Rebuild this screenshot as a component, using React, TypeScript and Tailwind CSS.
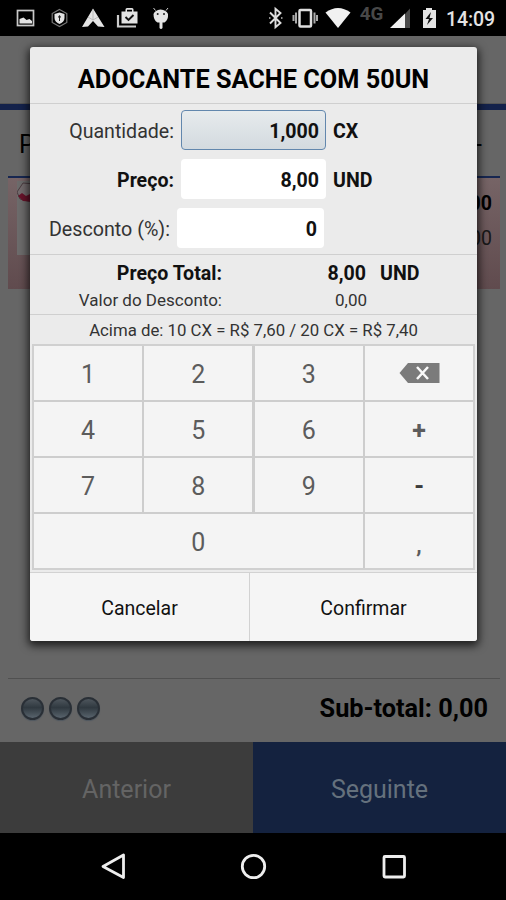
import React from "react";

function StatusBar() {
  return (
    <header className="h-9 shrink-0 bg-black">
      <svg width="506" height="36" viewBox="0 0 506 36" fill="#e4e4e4">
        <rect x="17.5" y="10.5" width="16" height="15" fill="none" stroke="#c8c8c8" strokeWidth="1.7" />
        <path d="M19.500 23.500v-4.500l4-1.500 3 2.500 3-1 2.500 2v2.500z" />
        <path d="M59.500 9.500l7.300 4v9l-7.300 4-7.300-4v-9z" fill="none" stroke="#777" strokeWidth="1.200" />
        <path d="M59.500 12.500l5 1.500v4c0 3-2.300 4.700-5 6-2.700-1.300-5-3-5-6v-4z" />
        <path d="M59.500 15l1.500 2-1 1v3h-1v-3l-1-1z" fill="#222" />
        <path d="M93 8.500L104.500 27l-6.500-.5-5-5.500-5 5.500-6 .5z" />
        <path d="M88 17l5 3 5-3M93 9v11" stroke="#aaa" strokeWidth=".7" fill="none" />
        <path d="M118 15v11.500h18" fill="none" stroke="#ccc" strokeWidth="2.200" />
        <path d="M121.500 11.500h4V9.500q0-1.500 1.500-1.500h5q1.500 0 1.500 1.500v2h4v12h-16zM127 9.800v1.700h5V9.800z" fillRule="evenodd" />
        <path d="M125.500 17l3 3 5-5" fill="none" stroke="#151515" strokeWidth="1.900" />
        <path d="M155.500 10.500l-2-2.500M166 10.500l2-2.500" stroke="#ccc" strokeWidth="1" />
        <path d="M153.500 14q1.500-4 7-4.500 6 .5 7.500 4.500.5 6-3.500 8.500h-2v5.500q-1.500 2-3 0v-5.500h-2q-4-2-4-8.500z" />
        <circle cx="157.700" cy="14" r="1" fill="#222" /><circle cx="164" cy="14" r="1" fill="#222" />
        <path d="M270 12.500l10.500 10.500-5 4.300V8.700l5 4.300L270 23.500" fill="none" stroke="#dedede" strokeWidth="1.900" />
        <path d="M269 18h1.500M281 18h1.500" stroke="#bbb" strokeWidth="1.500" />
        <rect x="299.500" y="10" width="11.500" height="16.500" rx="1" fill="none" stroke="#dedede" strokeWidth="2.500" />
        <path d="M296 12.500v11M314.500 12.500v11M293.500 15v6M317 15v6" stroke="#aaa" strokeWidth="2" />
        <path d="M325.500 12.500q12.500-9 25 0L338 28z" fill="#f1f1f1" />
        <text x="359.800" y="19.800" fontFamily="Roboto, sans-serif" fontSize="18.800" fontWeight="700" fill="#484848">4G</text>
        <path d="M405 14l5-5.500V28h-5z" fill="#4a4a4a" />
        <path d="M405 13.500V28h-15z" fill="#f1f1f1" />
        <path d="M423 10h3V8h6v2h4v18h-13z" />
        <path d="M431 12l-5.500 7h3.500l-2 6 6-7h-3.500z" fill="#111" />
        <text x="446" y="26" fontFamily="Roboto, sans-serif" fontSize="19.500" fontWeight="500" textLength="49" fill="#e4e4e4">14:09</text>
      </svg>
    </header>
  );
}

function Orb() {
  return (
    <span className="size-[23px] rounded-full border-2 border-[#292f36] bg-linear-to-b from-[#4e565d] via-[#303940] via-45% to-[#59646d] shadow-[0_1px_1px_#505860]" />
  );
}

function OrderScreen() {
  return (
    <main className="flex h-[797px] flex-col bg-[#666]">
      <div className="h-[68px] border-b border-[#555]" />
      <div className="h-[6px] bg-[#14224b]" />
      <div className="mr-[6px] ml-2 flex h-[68px] items-center justify-between border-b-2 border-[#172751] pt-[3px] pr-[18px] pl-[11px] text-[25px]">
        <span>P</span>
        <span>-</span>
      </div>
      <div className="mr-[6px] ml-2 flex h-[111px] justify-between bg-linear-to-b from-[#766466] to-[#604b4e] pr-2 pl-[9px]">
        <svg width="40" height="77" viewBox="0 0 40 77">
          <rect y="3" width="40" height="74" fill="#6c6b6b" />
          <path d="M6 5L0 14l3 7 15 4V6z" fill="#736b6d" stroke="#4b3b40" />
          <path d="M1 18l4-3 4 3 4-2 5 3v5L6 23z" fill="#67132a" />
        </svg>
        <div className="flex flex-col items-end pt-[12px] text-[19.5px] leading-[28px]">
          <span className="font-bold">8,00</span>
          <span className="mt-[7px] text-[#181818]">8,00</span>
        </div>
      </div>
      <div className="mr-[6px] ml-2 h-[390px] border-b border-[#505050]" />
      <div className="flex flex-1 items-center justify-between pr-[18px] pb-1 pl-[21px]">
        <div className="flex gap-[5px]"><Orb /><Orb /><Orb /></div>
        <strong className="text-[25.3px] font-bold">Sub-total: 0,00</strong>
      </div>
      <div className="grid h-[91px] grid-cols-2 text-[25px]">
        <button className="bg-[#3c3c3c] pt-1 text-[#646464]">Anterior</button>
        <button className="bg-[#14223f] pt-1 text-[#65717d]">Seguinte</button>
      </div>
    </main>
  );
}

const keyClass = "flex items-center justify-center bg-[#f4f4f4] pt-[4px] text-[25px] text-[#5c5c5c]";

function Keypad() {
  return (
    <div className="ml-[2px] grid h-[226px] w-[443px] grid-cols-4 grid-rows-4 gap-[2.5px] border-2 border-[#d0d0d0] bg-[#cdcdcd]">
      <button className={keyClass}>1</button>
      <button className={keyClass}>2</button>
      <button className={keyClass}>3</button>
      <button className="flex items-center justify-center bg-[#f4f4f4]">
        <svg width="41" height="20" viewBox="0 0 41 20">
          <path d="M0.500 10L9 0h31.500v20H9z" fill="#7b7b7b" />
          <path d="M18 4l11 12M29 4L18 16" stroke="#fafafa" strokeWidth="2.500" />
        </svg>
      </button>
      <button className={keyClass}>4</button>
      <button className={keyClass}>5</button>
      <button className={keyClass}>6</button>
      <button className={keyClass + " font-bold"}>+</button>
      <button className={keyClass}>7</button>
      <button className={keyClass}>8</button>
      <button className={keyClass}>9</button>
      <button className="flex items-center justify-center bg-[#f4f4f4] pt-[4px] text-[25px] font-bold text-[#3c3c3c]">-</button>
      <button className={keyClass + " col-span-3"}>0</button>
      <button className="flex items-center justify-center bg-[#f4f4f4] pt-[8px] text-[22px] font-bold text-[#5c5c5c]">,</button>
    </div>
  );
}

function ItemDialog() {
  return (
    <section className="absolute top-[47px] left-[30px] flex h-[594px] w-[447px] flex-col overflow-hidden rounded-[3px] bg-[#ebebeb] text-[#111] shadow-[0_3px_9px_2px_rgba(0,0,0,.7)]">
      <h1 className="flex h-[57px] shrink-0 items-center justify-center border-b border-[#cfcfcf] pt-[10px] text-[25.3px] font-bold text-black">ADOCANTE SACHE COM 50UN</h1>
      <div className="flex h-[151px] shrink-0 flex-col gap-[9px] border-b border-[#cfcfcf] pt-[6px] text-[19.6px]">
        <div className="flex h-10 items-center">
          <label className="w-[144px] pt-[3px] text-right text-[19.6px] text-[#333]">Quantidade:</label>
          <div className="ml-[7px] flex h-10 w-[145px] items-center justify-end rounded-[4px] border-[1.5px] border-[#6287ad] bg-linear-to-b from-[#e7ebed] to-[#d3dadf] pt-[3px] pr-[6px] font-bold">1,000</div>
          <span className="ml-[7px] pt-[3px] font-bold">CX</span>
        </div>
        <div className="flex h-10 items-center">
          <label className="w-[144px] pt-[3px] text-right font-bold">Preço:</label>
          <div className="ml-[7px] flex h-10 w-[145px] items-center justify-end rounded-[4px] bg-white pt-[3px] pr-[7px] font-bold">8,00</div>
          <span className="ml-[7px] pt-[3px] font-bold">UND</span>
        </div>
        <div className="flex h-10 items-center">
          <label className="w-[140px] pt-[3px] text-right text-[19.7px] text-[#333]">Desconto (%):</label>
          <div className="ml-[7px] flex h-10 w-[147px] items-center justify-end rounded-[4px] bg-white pt-[3px] pr-[7px] font-bold">0</div>
        </div>
      </div>
      <div className="h-[60px] shrink-0 border-b border-[#cfcfcf] pt-[4px]">
        <div className="flex h-[29px] items-center pt-px text-[19.6px] font-bold">
          <span className="w-[192px] text-right">Preço Total:</span>
          <span className="w-[144px] text-right">8,00</span>
          <span className="ml-[14px]">UND</span>
        </div>
        <div className="flex h-[25px] items-center pt-[1px] text-[17px] text-[#333]">
          <span className="w-[192px] text-right">Valor do Desconto:</span>
          <span className="w-[145px] text-right">0,00</span>
        </div>
      </div>
      <p className="flex h-[29px] shrink-0 items-center justify-center pt-[3px] text-[16.8px] text-[#333]">Acima de: 10 CX = R$ 7,60 / 20 CX = R$ 7,40</p>
      <Keypad />
      <div className="mt-[2px] grid flex-1 grid-cols-[220px_1fr] border-t border-[#d2d2d2] bg-[#f5f5f5] text-[19.5px]">
        <button className="border-r border-[#d2d2d2] pt-[4px]">Cancelar</button>
        <button className="pt-[4px]">Confirmar</button>
      </div>
    </section>
  );
}

function NavigationBar() {
  return (
    <nav className="h-[67px] bg-black">
      <svg width="506" height="67" fill="none" stroke="#eee" strokeWidth="2.800">
        <path d="M123.500 22v22.500L103 33.500z" strokeLinejoin="round" />
        <circle cx="253.500" cy="33.500" r="11.200" />
        <rect x="384" y="23.500" width="20.500" height="20.500" rx="1" />
      </svg>
    </nav>
  );
}

export default function App() {
  return (
    <div className="relative h-[900px] w-[506px] overflow-hidden bg-black font-['Roboto',sans-serif] text-black">
      <StatusBar />
      <OrderScreen />
      <NavigationBar />
      <ItemDialog />
    </div>
  );
}
